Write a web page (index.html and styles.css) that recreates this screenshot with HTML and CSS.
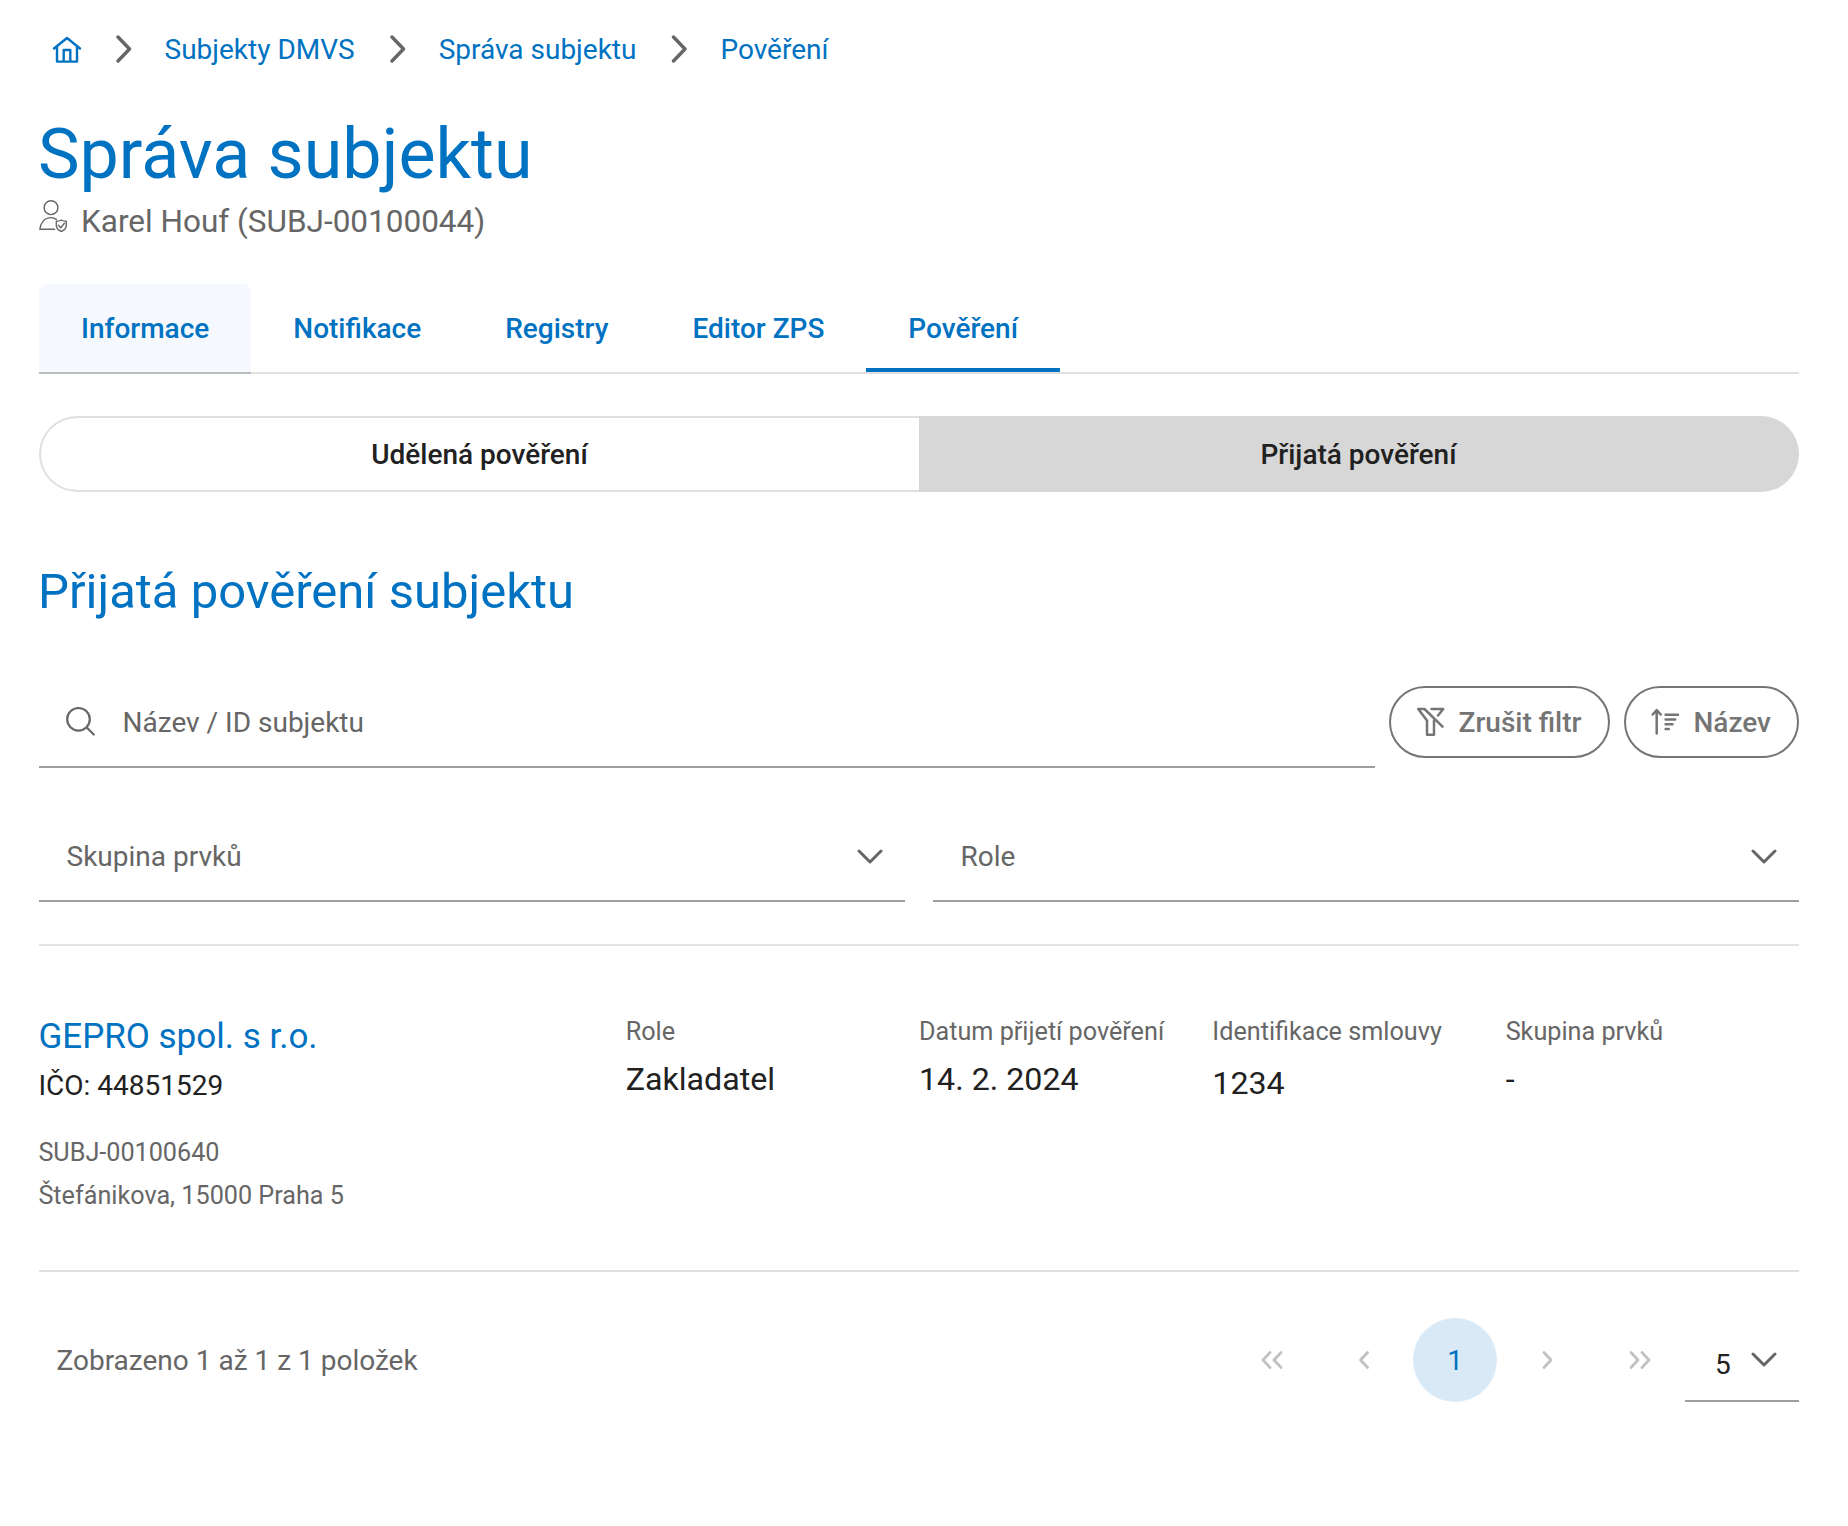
FILE: index.html
```html
<!DOCTYPE html>
<html lang="cs">
<head>
<meta charset="utf-8">
<title>Správa subjektu</title>
<link rel="stylesheet" href="styles.css">
</head>
<body>
<main class="page">
  <nav class="breadcrumb">
    <a class="home" href="#"><svg class="icon" width="30" height="28" viewBox="0 0 30 28"><path d="M2 12.500 15 2l13 10.500M5 11v14.600h20V11M11.700 25v-11h6.600v11"/></svg></a>
    <svg class="sep" width="16" height="28" viewBox="0 0 16 28"><path d="M2 2l11.500 12L2 26"/></svg>
    <a class="crumb" href="#">Subjekty DMVS</a>
    <svg class="sep" width="16" height="28" viewBox="0 0 16 28"><path d="M2 2l11.500 12L2 26"/></svg>
    <a class="crumb" href="#">Správa subjektu</a>
    <svg class="sep" width="16" height="28" viewBox="0 0 16 28"><path d="M2.500 2l11.500 12L2.500 26"/></svg>
    <a class="crumb" href="#">Pověření</a>
  </nav>

  <h1 class="title">Správa subjektu</h1>
  <div class="subject">
    <svg class="person" width="28" height="32" viewBox="0 0 28 32"><circle cx="12" cy="7.700" r="6.900"/><path d="M15.500 29.300H.8C1.600 23 5.400 17.600 11.800 17.600c2.200 0 4 .6 5.500 1.800M17.300 21.300c2.200 0 3.700-.4 5-1.300 1.300.9 2.800 1.300 5 1.300v4c0 3-2 5-5 6.200-3-1.200-5-3.200-5-6.200zM19.500 25.200l2.200 2.500 3.700-4.500"/></svg>
    <span>Karel Houf (SUBJ-00100044)</span>
  </div>

  <div class="tabs">
    <a class="tab tab-hover" href="#">Informace</a>
    <a class="tab" href="#">Notifikace</a>
    <a class="tab" href="#">Registry</a>
    <a class="tab" href="#">Editor ZPS</a>
    <a class="tab tab-active" href="#">Pověření</a>
  </div>

  <div class="switch">
    <button class="switch-item">Udělená pověření</button>
    <button class="switch-item switch-on">Přijatá pověření</button>
  </div>

  <h2 class="section-title">Přijatá pověření subjektu</h2>

  <div class="toolbar">
    <div class="search">
      <svg class="glass" width="30" height="30" viewBox="0 0 30 30"><circle cx="12.500" cy="13.300" r="11.300"/><path d="M20.700 21.500l7 7"/></svg>
      <span>Název / ID subjektu</span>
    </div>
    <button class="pill pill-clear"><svg class="pill-icon" width="28" height="30" viewBox="0 0 28 30"><path d="M1.200 2h6.300L25.500 19.700M1.200 2l8.800 11.500v14.300h7V13.500M14.500 2h11.700l-5.200 6.500"/></svg><span>Zrušit filtr</span></button>
    <button class="pill"><svg class="pill-icon" width="28" height="28" viewBox="0 0 28 28"><path d="M5.700 25.500V2.200M1.700 6.500l4-4.300 4 4.300M14.600 6.700h12.600M14.600 11.500h9.600M14.600 16.300h6.900M14.600 21h3.200"/></svg><span>Název</span></button>
  </div>

  <div class="filters">
    <div class="select"><span>Skupina prvků</span><svg class="down" width="26" height="16" viewBox="0 0 26 16"><path d="M2 2l11 11L24 2"/></svg></div>
    <div class="select"><span>Role</span><svg class="down" width="26" height="16" viewBox="0 0 26 16"><path d="M2 2l11 11L24 2"/></svg></div>
  </div>

  <section class="record">
    <div class="subject-info">
      <a class="name" href="#">GEPRO spol. s r.o.</a>
      <div class="ico">IČO: 44851529</div>
      <div class="meta">SUBJ-00100640</div>
      <div class="meta">Štefánikova, 15000 Praha 5</div>
    </div>
    <div class="field"><div class="label">Role</div><div class="value">Zakladatel</div></div>
    <div class="field"><div class="label">Datum přijetí pověření</div><div class="value">14. 2. 2024</div></div>
    <div class="field"><div class="label">Identifikace smlouvy</div><div class="value value-low">1234</div></div>
    <div class="field"><div class="label">Skupina prvků</div><div class="value">-</div></div>
  </section>

  <footer class="pager">
    <span class="summary">Zobrazeno 1 až 1 z 1 položek</span>
    <button class="page-btn"><svg width="24" height="20" viewBox="0 0 24 20"><path d="M11 2.500L4 10l7 7.500M22 2.500L15 10l7 7.500"/></svg></button>
    <button class="page-btn"><svg width="14" height="20" viewBox="0 0 14 20"><path d="M11.500 2.500L4.500 10l7 7.500"/></svg></button>
    <button class="page-btn page-current">1</button>
    <button class="page-btn"><svg width="14" height="20" viewBox="0 0 14 20"><path d="M4 2.500L11 10l-7 7.500"/></svg></button>
    <button class="page-btn"><svg width="24" height="20" viewBox="0 0 24 20"><path d="M4 2.500L11 10l-7 7.500M15 2.500L22 10l-7 7.500"/></svg></button>
    <div class="page-size"><span>5</span><svg class="down" width="26" height="16" viewBox="0 0 26 16"><path d="M2 2l11 11L24 2"/></svg></div>
  </footer>
</main>
</body>
</html>
```
FILE: styles.css
```css
* { box-sizing: border-box; }
body {
  margin: 0;
  background: #fff;
  color: #212121;
  font: 400 28px/40px Roboto, "Liberation Sans", sans-serif;
}
a { color: #0072c2; text-decoration: none; }
button { font: inherit; color: inherit; background: none; border: 0; padding: 0; }
svg { display: block; flex: none; fill: none; stroke: currentColor; stroke-linecap: round; stroke-linejoin: round; }
.page { padding: 30px 49px 0 39px; }

.breadcrumb { display: flex; align-items: center; gap: 34px; height: 40px; padding-left: 12.5px; color: #666; white-space: nowrap; }
.icon { margin-bottom: 1px; stroke-width: 2.4; }
.sep { margin-bottom: 2px; stroke-width: 3.4; }
.crumb { margin: 0 1px 0 -1px; }

.title { margin: 42px 0 0 -1px; font-weight: 400; font-size: 70px; line-height: 84px; color: #0072c2; }
.subject { display: flex; gap: 14px; height: 50px; line-height: 51px; font-size: 31.5px; color: #666; }
.person { margin-top: 4px; stroke-width: 1.4; }

.tabs { display: flex; margin-top: 38px; height: 90px; border-bottom: 2px solid #e0e0e0; }
.tab { height: 90px; padding: 0 42px; line-height: 89px; font-weight: 500; }
.tab-hover { background: #f5f9fe; border-bottom: 2px solid #b9bdc1; border-radius: 8px 8px 0 0; }
.tab-active { height: 88px; border-bottom: 4px solid #0072c2; }

.switch { display: flex; height: 76px; margin-top: 42px; font-weight: 500; }
.switch-item { flex: 0 0 50%; padding: 2px 1px 0 0; border: 2px solid #e0e0e0; border-right: 0; border-radius: 38px 0 0 38px; }
.switch-on { background: #d7d7d7; border: 0; border-radius: 0 38px 38px 0; }

.section-title { margin: 70px 0 0 -1px; font-weight: 400; font-size: 49px; line-height: 60px; color: #0072c2; }

.toolbar { display: flex; gap: 14px; height: 92px; margin-top: 54px; }
.search { flex: 1; display: flex; gap: 27px; align-items: center; padding-left: 26.5px; border-bottom: 2px solid #9e9e9e; color: #666; }
.search span { padding-top: 3px; }
.glass { stroke-width: 2.2; }
.pill { display: flex; align-items: center; height: 72px; margin-top: 10px; padding: 0 26px 0 25px; border: 2px solid #757575; border-radius: 36px; color: #757575; font-weight: 500; white-space: nowrap; }
.pill-clear { padding: 0 27px 0 26px; }
.pill span { padding-top: 2px; }
.pill-icon { margin-right: 14px; stroke-width: 2.5; }

.filters { display: grid; grid-template-columns: 1fr 1fr; gap: 28px; margin-top: 42px; padding-bottom: 42px; border-bottom: 2px solid #e3e3e3; }
.select { display: flex; align-items: center; justify-content: space-between; height: 92px; padding: 3px 22px 0 27.5px; border-bottom: 2px solid #9e9e9e; color: #666; }
.down { stroke-width: 3; color: #666; }

.record { display: grid; grid-template-columns: 2fr 1fr 1fr 1fr 1fr; height: 326px; padding-top: 68px; border-bottom: 2px solid #e0e0e0; }
.subject-info { margin-left: -0.6px; }
.name { display: block; padding-top: 1px; font-size: 35px; line-height: 44px; }
.ico { margin-top: 6px; margin-bottom: 24px; line-height: 42px; }
.meta { font-size: 25.2px; line-height: 43px; color: #666; }
.field { min-width: 0; white-space: nowrap; }
.label { font-size: 25.2px; line-height: 36px; color: #666; }
.value { margin-top: 9px; font-size: 32.2px; line-height: 40px; }
.value-low { margin-top: 13px; }

.pager { display: flex; align-items: center; margin-top: 46px; height: 84px; }
.summary { flex: 1; padding: 2px 0 0 17.5px; color: #666; }
.page-btn { display: flex; align-items: center; justify-content: center; width: 84px; height: 84px; margin: 0 4px; border-radius: 50%; color: #c1c1c1; }
.page-btn svg { stroke-width: 2.8; }
.page-current { padding-top: 1px; background: #d9e9f6; color: #0072c2; }
.page-size { display: flex; align-items: center; justify-content: space-between; width: 114px; height: 84px; padding: 2px 22px 0 30px; border-bottom: 2px solid #9e9e9e; }
.page-size span { padding-top: 9px; }
```
